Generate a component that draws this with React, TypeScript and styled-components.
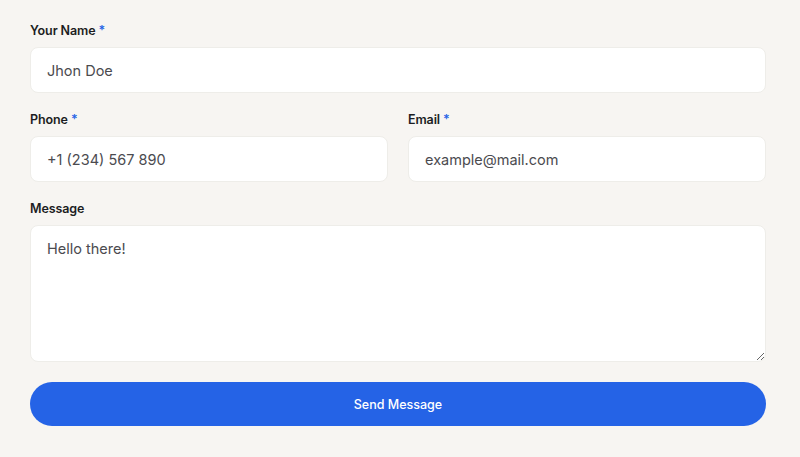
import * as React from "react";
import styled, { createGlobalStyle } from "styled-components";

const colors = {
  page: "#f7f5f2",
  field: "#ffffff",
  border: "#eeede9",
  label: "#1c1d22",
  text: "#4b4b4f",
  accent: "#2563e6",
};

const GlobalStyle = createGlobalStyle`
  html, body {
    margin: 0;
    background: ${colors.page};
  }
  body {
    font-family: Inter, "Noto Sans", "Liberation Sans", sans-serif;
  }
`;

const Form = styled.form`
  display: flex;
  flex-direction: column;
  gap: 18px;
  padding: 22px 34px 0 30px;
  min-height: 457px;
  box-sizing: border-box;
`;

const Row = styled.div`
  display: grid;
  grid-template-columns: 1fr 1fr;
  gap: 20px;
`;

const Field = styled.div`
  display: flex;
  flex-direction: column;
  gap: 8px;
`;

const Label = styled.label`
  font-size: 12.5px;
  line-height: 17px;
  font-weight: 600;
  color: ${colors.label};
  letter-spacing: -0.1px;
`;

const Required = styled.span`
  color: ${colors.accent};
  margin-left: 3px;
`;

const Input = styled.input`
  height: 46px;
  box-sizing: border-box;
  padding: 0 16px;
  border: 1px solid ${colors.border};
  border-radius: 8px;
  background: ${colors.field};
  font: inherit;
  font-size: 14.5px;
  color: ${colors.text};
  outline: none;
`;

const TextArea = styled.textarea`
  height: 137px;
  box-sizing: border-box;
  padding: 13px 16px;
  border: 1px solid ${colors.border};
  border-radius: 8px;
  background: ${colors.field};
  font: inherit;
  font-size: 14.5px;
  line-height: 20px;
  color: ${colors.text};
  resize: vertical;
  outline: none;
`;

const SendButton = styled.button`
  margin-top: 2px;
  height: 44px;
  border: none;
  border-radius: 22px;
  background: ${colors.accent};
  color: #ffffff;
  font: inherit;
  font-size: 12.5px;
  font-weight: 500;
  cursor: pointer;
`;

function TextField(props: { label: string, value: string, required?: boolean, type?: string }) {
  return (
    <Field>
      <Label>
        {props.label}
        {props.required && <Required>*</Required>}
      </Label>
      <Input type={props.type || "text"} defaultValue={props.value} />
    </Field>
  );
}

export default function App() {
  return (
    <>
      <GlobalStyle />
      <Form onSubmit={e => e.preventDefault()}>
        <TextField label="Your Name" value="Jhon Doe" required={true} />
        <Row>
          <TextField label="Phone" value="+1 (234) 567 890" required={true} type="tel" />
          <TextField label="Email" value="example@mail.com" required={true} type="email" />
        </Row>
        <Field>
          <Label>Message</Label>
          <TextArea defaultValue="Hello there!" />
        </Field>
        <SendButton type="submit">Send Message</SendButton>
      </Form>
    </>
  );
}
